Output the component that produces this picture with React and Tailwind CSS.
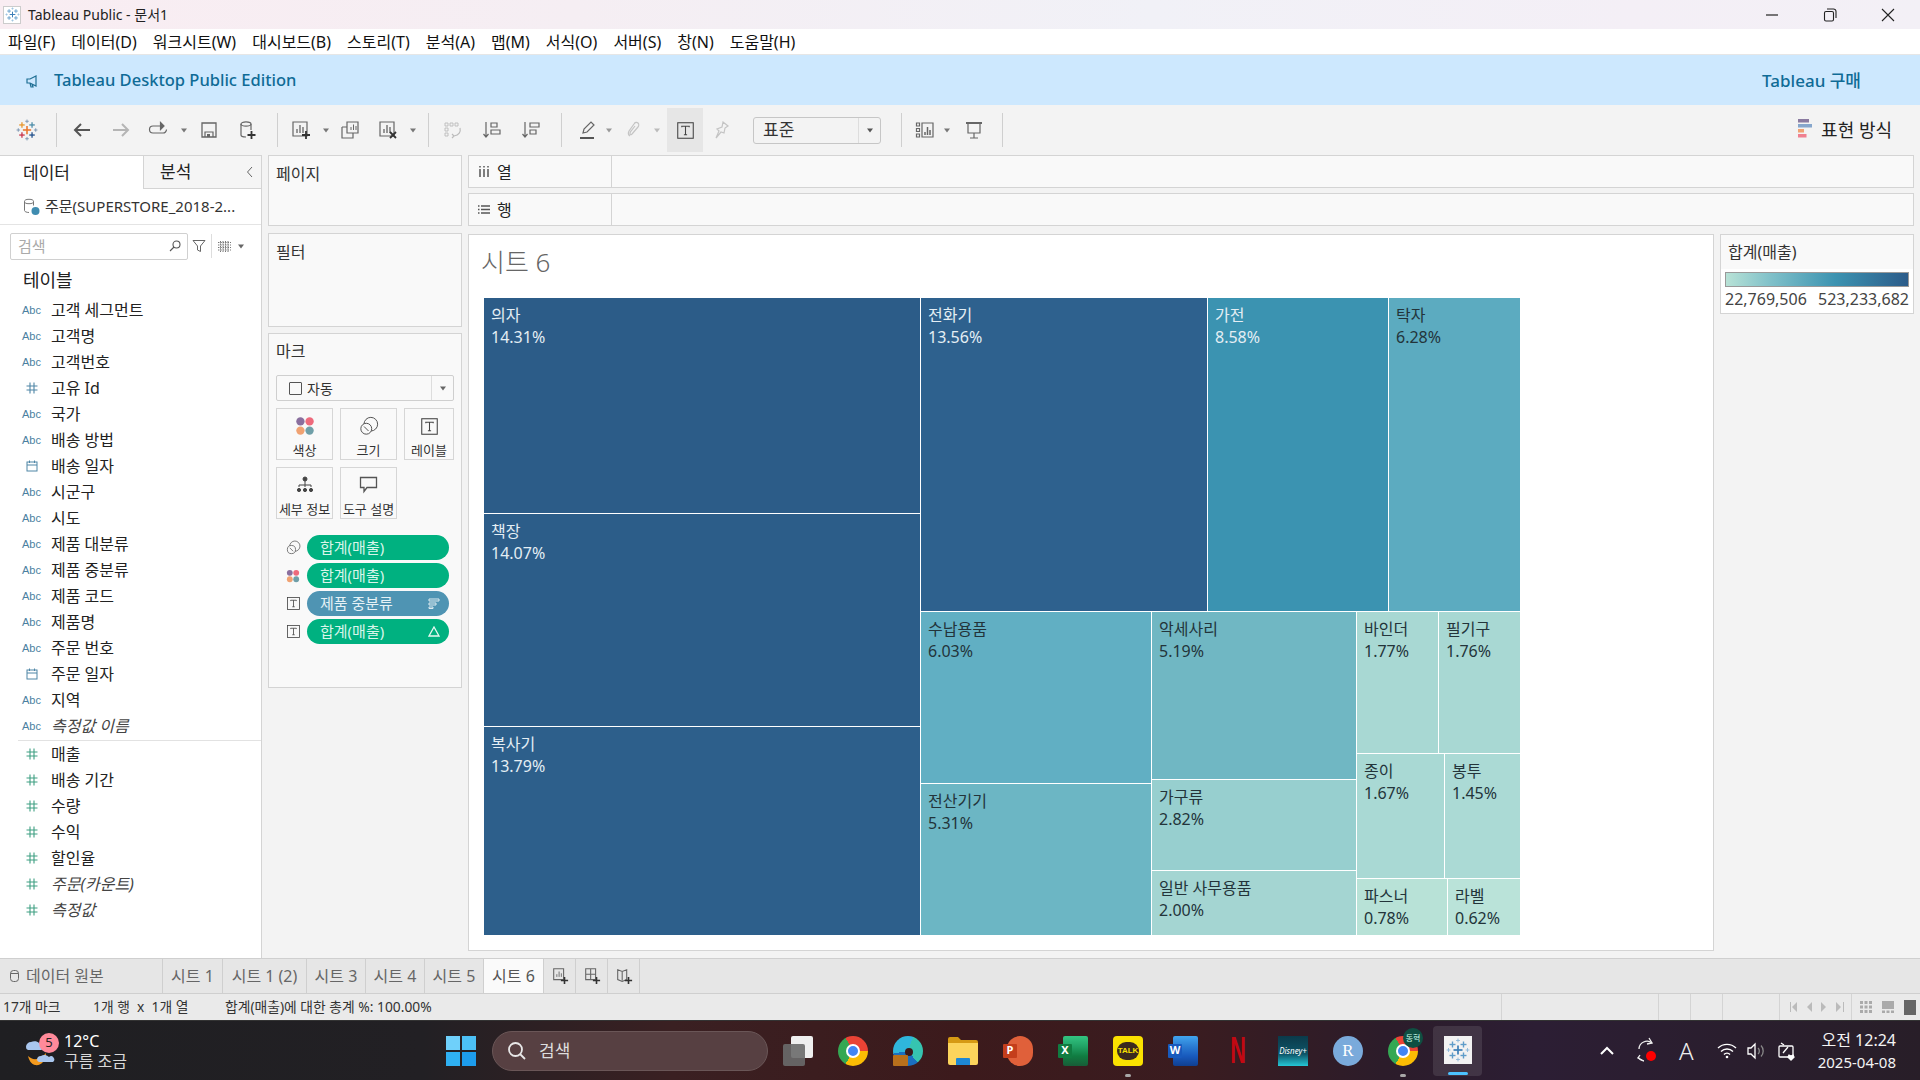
import React from "react";

const Cross = ({ x, y, r, c, w = 1 }) => (
  <g stroke={c} strokeWidth={w}>
    <line x1={x - r} y1={y} x2={x + r} y2={y} />
    <line x1={x} y1={y - r} x2={x} y2={y + r} />
  </g>
);
const TabLogo = ({ size = 20, colored = false }) => {
  const m = colored ? "#e8762d" : "#3c7fb8";
  const tl = colored ? "#e8972d" : "#5f9cc9";
  const tr = colored ? "#4a8ca8" : "#5f9cc9";
  const bl = colored ? "#c8334a" : "#5f9cc9";
  const br = colored ? "#1f4f8b" : "#5f9cc9";
  const s = colored ? "#7a94b0" : "#8fbadb";
  return (
    <svg width={size} height={size} viewBox="0 0 24 24" fill="none">
      <Cross x={12} y={12} r={4.5} c={m} w={1.7} />
      <Cross x={6.5} y={6.5} r={3} c={tl} w={1.4} />
      <Cross x={17.5} y={6.5} r={3} c={tr} w={1.4} />
      <Cross x={6.5} y={17.5} r={3} c={bl} w={1.4} />
      <Cross x={17.5} y={17.5} r={3} c={br} w={1.4} />
      <Cross x={12} y={2.5} r={1.9} c={s} w={1} />
      <Cross x={12} y={21.5} r={1.9} c={s} w={1} />
      <Cross x={2.5} y={12} r={1.9} c={s} w={1} />
      <Cross x={21.5} y={12} r={1.9} c={s} w={1} />
    </svg>
  );
};
const Ic = ({ children, w = 20, h = 20 }) => (
  <svg width={w} height={h} viewBox="0 0 20 20" fill="none" stroke="#666" strokeWidth="1.2" className="shrink-0">
    {children}
  </svg>
);
const Dd = ({ c = "#777" }) => (
  <svg width="8" height="5" viewBox="0 0 8 5" className="shrink-0"><path d="M1 0.5h6L4 4.5z" fill={c} /></svg>
);
const Sep = ({ cls }) => <div className={`w-px h-[34px] bg-[#cfcfcf] shrink-0 ${cls}`} />;
const Plus = ({ x, y }) => <path d={`M${x - 4} ${y}h8M${x} ${y - 4}v8`} stroke="#333" strokeWidth="1.8" />;
const BarsBox = () => (
  <>
    <path d="M2 2h14v14H2z" />
    <path d="M6 13v-4M9 13V5M12 13v-6" strokeWidth="1.3" />
  </>
);
const TIcon = ({ size = 16 }) => (
  <svg width={size} height={size} viewBox="0 0 16 16" fill="none" stroke="#444" className="shrink-0">
    <rect x="0.7" y="0.7" width="14.6" height="14.6" />
    <path d="M4.5 5V4h7v1M8 4v8M6.5 12h3" strokeWidth="1" />
  </svg>
);
const Dots = ({ size = 24 }) => (
  <svg width={size} height={size} viewBox="0 0 24 24" className="shrink-0">
    <circle cx="6.5" cy="6.5" r="5" fill="#8a6f9e" />
    <circle cx="17.5" cy="6.5" r="5" fill="#ee6a7c" />
    <circle cx="6.5" cy="17.5" r="5" fill="#f0a272" />
    <circle cx="17.5" cy="17.5" r="5" fill="#6f9fa8" />
  </svg>
);
const SizeIc = ({ size = 22 }) => (
  <svg width={size} height={size} viewBox="0 0 22 22" fill="none" stroke="#555" strokeWidth="1.1" className="shrink-0">
    <circle cx="13" cy="9" r="7.5" />
    <circle cx="8" cy="14" r="6" fill="#f9f9f9" />
    <path d="M5.5 11.5l5 5" />
  </svg>
);
const Hash = ({ c }) => (
  <svg width="12" height="12" viewBox="0 0 12 12" stroke={c} strokeWidth="1.1" className="shrink-0">
    <path d="M4 0.5v11M8 0.5v11M0.5 4h11M0.5 8h11" />
  </svg>
);
const Cal = () => (
  <svg width="12" height="12" viewBox="0 0 12 12" fill="none" stroke="#4f86a6" strokeWidth="1" className="shrink-0">
    <rect x="1" y="2" width="10" height="9" />
    <path d="M1 5h10M3.5 0.5v2.5M8.5 0.5v2.5" />
  </svg>
);

const Field = ({ type, name, italic, color = "blue" }) => (
  <div className="h-[26px] flex items-center shrink-0">
    <div className="w-[51px] flex justify-center pl-[12px] shrink-0">
      {type === "abc" && <span className="text-[11px] font-['Liberation_Sans',sans-serif] text-[#4b7f9f]">Abc</span>}
      {type === "hash" && <Hash c={color === "green" ? "#3f9f82" : "#4f86a6"} />}
      {type === "cal" && <Cal />}
    </div>
    <span className={`text-[16px] text-[#222] ${italic ? "italic text-[#444]" : ""}`}>{name}</span>
  </div>
);

const Card = ({ label, children, w = "w-[57px]" }) => (
  <div className={`${w} h-[52px] border border-[#d6d6d6] flex flex-col items-center pt-[5px] shrink-0`}>
    <div className="h-[24px] flex items-center justify-center">{children}</div>
    <span className="text-[13px] leading-[16px] mt-[4px] text-[#333] whitespace-nowrap">{label}</span>
  </div>
);

const Pill = ({ icon, text, blue, right }) => (
  <div className="flex items-center h-[25px] mb-[3px] shrink-0">
    <div className="w-[38px] flex justify-center pl-[10px] shrink-0">{icon}</div>
    <div className={`w-[142px] h-[25px] rounded-full flex items-center justify-between pl-[13px] pr-[9px] text-[15px] ${blue ? "bg-[#4f94b3] text-[#e6f2f6]" : "bg-[#00b180] text-[#d8f5ea]"}`}>
      <span>{text}</span>
      {right}
    </div>
  </div>
);

const Cell = ({ name, pct, cls, light, w, h }) => (
  <div className={`${cls} ${w || ""} ${h || ""} pl-[7px] pt-[6px] text-[16px] leading-[22px] overflow-hidden ${light ? "text-[#e4eef4]" : "text-[#23343a]"}`}>
    <div className="whitespace-nowrap">{name}</div>
    <div>{pct}</div>
  </div>
);

const Tab = ({ w, children, active }) => (
  <div className={`${w} h-full border-r border-[#cfcfcf] flex items-center justify-center text-[16px] shrink-0 ${active ? "bg-[#fafafa] text-[#555]" : "text-[#666]"}`}>
    {children}
  </div>
);

const Slot = ({ children, badge, cls = "ml-[15px]" }) => (
  <div className={`w-[40px] h-[40px] relative flex items-center justify-center shrink-0 ${cls}`}>
    {children}
    {badge && <div className="absolute bottom-[-6px] w-[6px] h-[3px] rounded bg-[#a8a8a8]" />}
  </div>
);

const menu = [
  ["파일(F)", "ml-[8px]"], ["데이터(D)", "ml-[16px]"], ["워크시트(W)", "ml-[16px]"], ["대시보드(B)", "ml-[16px]"],
  ["스토리(T)", "ml-[16px]"], ["분석(A)", "ml-[16px]"], ["맵(M)", "ml-[16px]"], ["서식(O)", "ml-[16px]"],
  ["서버(S)", "ml-[16px]"], ["창(N)", "ml-[16px]"], ["도움말(H)", "ml-[16px]"],
];

const dims = [
  ["abc", "고객 세그먼트"], ["abc", "고객명"], ["abc", "고객번호"], ["hash", "고유 Id"], ["abc", "국가"],
  ["abc", "배송 방법"], ["cal", "배송 일자"], ["abc", "시군구"], ["abc", "시도"], ["abc", "제품 대분류"],
  ["abc", "제품 중분류"], ["abc", "제품 코드"], ["abc", "제품명"], ["abc", "주문 번호"], ["cal", "주문 일자"],
  ["abc", "지역"], ["abc", "측정값 이름", true],
];
const meas = [["매출"], ["배송 기간"], ["수량"], ["수익"], ["할인율"], ["주문(카운트)", true], ["측정값", true]];

export default function App() {
  return (
    <div className="w-[1920px] h-[1080px] overflow-hidden flex flex-col bg-[#f3f3f3] font-['Noto_Sans','Noto_Sans_CJK_KR',sans-serif] text-[#222]">
      {/* title bar */}
      <div className="h-[29px] shrink-0 flex items-center bg-[linear-gradient(90deg,#f9edf2_0%,#f5eef3_30%,#f1f1f7_60%,#f4eff6_85%,#f3f0f6_100%)]">
        <div className="ml-[3px] w-[18px] h-[18px] bg-white border border-[#ccc] flex items-center justify-center"><TabLogo size={15} /></div>
        <span className="ml-[7px] text-[14px] text-[#222]">Tableau Public - 문서1</span>
        <div className="ml-auto flex items-center">
          <svg width="14" height="14" viewBox="0 0 14 14" stroke="#222" className="mr-[44px]"><path d="M1 7h12" strokeWidth="1.2" /></svg>
          <svg width="14" height="14" viewBox="0 0 14 14" fill="none" stroke="#222" className="mr-[44px]" strokeWidth="1.1"><rect x="1.5" y="3.5" width="9" height="9.5" rx="1.5" /><path d="M4 1h6.5A2.5 2.5 0 0 1 13 3.5V10" /></svg>
          <svg width="14" height="14" viewBox="0 0 14 14" stroke="#222" className="mr-[25px]" strokeWidth="1.1"><path d="M1 1l12 12M13 1L1 13" /></svg>
        </div>
      </div>
      {/* menu */}
      <div className="h-[26px] shrink-0 bg-white border-b border-[#e6e6e6] flex items-center text-[16px] text-[#111]">
        {menu.map(([t, c]) => <span key={t} className={c}>{t}</span>)}
      </div>
      {/* banner */}
      <div className="h-[50px] shrink-0 bg-[#cde8fe] flex items-center text-[#0f6b96] text-[17px] pt-[1px]">
        <svg width="14" height="14" viewBox="0 0 14 14" fill="none" stroke="#1f6f94" strokeWidth="1.2" className="ml-[26px]"><path d="M1 5v4h3l6 3V2L4 5zM4 9l1 4h2l-1-3" /></svg>
        <span className="ml-[14px] font-medium text-[16.5px]">Tableau Desktop Public Edition</span>
        <span className="ml-auto mr-[59px] font-medium">Tableau 구매</span>
      </div>
      {/* toolbar */}
      <div className="h-[50px] shrink-0 flex items-center relative">
        <div className="ml-[16px] w-[22px] h-[22px]"><TabLogo size={22} colored /></div>
        <Sep cls="ml-[18px]" />
        <div className="ml-[15px]"><Ic><path d="M18 10H3M9 4l-6 6 6 6" strokeWidth="2" stroke="#555" /></Ic></div>
        <div className="ml-[19px]"><Ic><path d="M2 10h15M11 4l6 6-6 6" strokeWidth="2" stroke="#b5b5b5" /></Ic></div>
        <div className="ml-[17px]"><Ic><path d="M15 6H5a3.5 3.5 0 0 0 0 7h10a3.5 3.5 0 0 0 3.5-3.5" /><path d="M12.5 2.5L16 6l-3.5 3.5z" fill="#666" /></Ic></div>
        <div className="ml-[12px]"><Dd /></div>
        <div className="ml-[11px]"><Ic><path d="M3 3h14v14H3z" strokeWidth="1.3" /><path d="M6 17v-5h8v5" /><path d="M8 14h3v3H8z" fill="#666" stroke="none" /></Ic></div>
        <div className="ml-[18px]"><Ic><ellipse cx="9" cy="4" rx="5" ry="2.2" /><path d="M4 4v11c0 1 2 2 5 2M14 4v6" /><Plus x={14.5} y={15} /></Ic></div>
        <Sep cls="ml-[20px]" />
        <div className="ml-[13px]"><Ic><BarsBox /><Plus x={15} y={15} /></Ic></div>
        <div className="ml-[11px]"><Dd /></div>
        <div className="ml-[10px]"><Ic><path d="M7 2h11v11H7z" /><path d="M2 7h5M2 7v11h11v-5" /><path d="M11 10V7M13.5 10V4.5M16 10V6" strokeWidth="1" /></Ic></div>
        <div className="ml-[18px]"><Ic><BarsBox /><path d="M12 12l6 6M18 12l-6 6" stroke="#333" strokeWidth="1.8" /></Ic></div>
        <div className="ml-[11px]"><Dd /></div>
        <Sep cls="ml-[11px]" />
        <div className="ml-[14px]"><Ic><path d="M2 3h3v3H2zM7 3h3v3H7zM12 3h3v3h-3zM2 8h3v3H2zM2 13h3v3H2z" stroke="#bbb" strokeWidth="0.9" /><path d="M17 8c1 4-1 7-6 8M9 14l2 2-2 2" stroke="#bbb" /></Ic></div>
        <div className="ml-[19px]"><Ic><path d="M4 2v15M1.5 14L4 17l2.5-3" /><path d="M9 3h6v4H9zM9 10h9v4H9z" /></Ic></div>
        <div className="ml-[19px]"><Ic><path d="M4 2v15M1.5 14L4 17l2.5-3" /><path d="M9 3h9v4H9zM9 10h6v4H9z" /></Ic></div>
        <Sep cls="ml-[20px]" />
        <div className="ml-[15px]"><Ic><path d="M6 13l1-4 7-7 3 3-7 7z" /><path d="M3 18h14" strokeWidth="2" stroke="#555" /></Ic></div>
        <div className="ml-[8px]"><Dd c="#999" /></div>
        <div className="ml-[10px]"><Ic><path d="M7 16c-2-1-2-3-1-5l5-7c1-2 3-2 4-1s1 3 0 4l-6 7c-1 1-2 1-2 0s0-2 1-3l4-5" stroke="#c4c4c4" /></Ic></div>
        <div className="ml-[10px]"><Dd c="#bbb" /></div>
        <div className="ml-[6px] w-[36px] h-[44px] bg-[#e6e6e6] flex items-center justify-center"><TIcon size={17} /></div>
        <div className="ml-[8px]"><Ic><path d="M12 2l5 4-3 2-1 5-3-1-5 6 3-7-2-2 5-2z" stroke="#c4c4c4" /></Ic></div>
        <div className="ml-[22px] w-[128px] h-[27px] border border-[#c6c6c6] rounded-[3px] flex items-center text-[17px] shrink-0">
          <span className="ml-[9px] text-[#333]">표준</span>
          <div className="ml-auto w-[22px] h-full border-l border-[#ddd] flex items-center justify-center"><Dd c="#555" /></div>
        </div>
        <Sep cls="ml-[20px]" />
        <div className="ml-[13px]"><Ic><path d="M7 3h11v14H7z" /><path d="M1.5 3h3v3h-3zM1.5 8.5h3v3h-3zM1.5 14h3v3h-3z" /><path d="M10 15v-3M12.5 15V7M15 15v-5" strokeWidth="1.5" /></Ic></div>
        <div className="ml-[8px]"><Dd /></div>
        <div className="ml-[13px]"><Ic><path d="M2 3h16" strokeWidth="2" /><path d="M4 4v9h12V4M10 13v5M6 18h8" /></Ic></div>
        <Sep cls="ml-[18px]" />
        <div className="ml-auto mr-[28px] flex items-center">
          <svg width="14" height="19" viewBox="0 0 14 19" className="mr-[9px] mb-[4px]">
            <rect x="0" y="0" width="11" height="3.5" fill="#8a7aa0" />
            <rect x="0" y="5" width="14" height="3.5" fill="#86a6cc" />
            <rect x="0" y="10" width="6" height="3.5" fill="#f0a272" />
            <rect x="0" y="15" width="8.5" height="3.5" fill="#f08090" />
          </svg>
          <span className="text-[18px] text-[#222]">표현 방식</span>
        </div>
      </div>
      {/* body */}
      <div className="h-[803px] shrink-0 flex">
        {/* sidebar */}
        <div className="w-[262px] shrink-0 bg-white border-r border-[#d4d4d4] flex flex-col">
          <div className="h-[34px] flex shrink-0">
            <div className="w-[143px] flex items-center pl-[23px] text-[17px] border-t border-[#d4d4d4]">데이터</div>
            <div className="flex-1 bg-[#f5f5f5] border-l border-b border-t border-[#d4d4d4] flex items-center pl-[16px] text-[17px] relative">
              분석
              <svg width="8" height="12" viewBox="0 0 8 12" fill="none" stroke="#666" className="absolute right-[7px] top-[10px]"><path d="M6 1L1.5 6 6 11" /></svg>
            </div>
          </div>
          <div className="h-[36px] flex items-center border-b border-[#e4e4e4] shrink-0">
            <svg width="17" height="18" viewBox="0 0 17 18" fill="none" stroke="#777" className="ml-[23px] shrink-0"><ellipse cx="6" cy="3.5" rx="4.5" ry="2.2" /><path d="M1.5 3.5v9c0 1 2 2 4.5 2M10.5 3.5v4" /><circle cx="12.5" cy="13" r="4" fill="#3f8cb0" stroke="none" /></svg>
            <span className="ml-[5px] text-[15px] text-[#333] whitespace-nowrap">주문(SUPERSTORE_2018-2...</span>
          </div>
          <div className="flex items-center h-[36px] shrink-0 mt-[3px]">
            <div className="ml-[10px] w-[178px] h-[27px] border border-[#d0d0d0] rounded-[2px] flex items-center justify-between pl-[7px] pr-[6px]">
              <span className="text-[15px] text-[#aaa]">검색</span>
              <svg width="12" height="12" viewBox="0 0 12 12" fill="none" stroke="#555" strokeWidth="1.1"><circle cx="7.5" cy="4.5" r="3.5" /><path d="M5 7l-4 4" /></svg>
            </div>
            <svg width="14" height="14" viewBox="0 0 14 14" fill="none" stroke="#666" className="ml-[4px]"><path d="M1 1.5h12L8.5 7v5.5l-3-1.5V7z" /></svg>
            <div className="w-px h-[24px] bg-[#ddd] ml-[5px]" />
            <svg width="13" height="11" viewBox="0 0 13 11" stroke="#666" className="ml-[6px]"><path d="M0 1.5h13M0 4h13M0 6.5h13M0 9h13M2.5 0v11M5 0v11M7.5 0v11M10 0v11" strokeWidth="0.9" strokeDasharray="1.4 1" /></svg>
            <div className="ml-[6px]"><Dd c="#666" /></div>
          </div>
          <div className="ml-[23px] mt-[3px] h-[27px] flex items-center text-[18px] shrink-0">테이블</div>
          <div className="mt-[3px]">
            {dims.map(([t, n, i]) => <Field key={n} type={t} name={n} italic={i} />)}
          </div>
          <div className="ml-[18px] h-px bg-[#e2e2e2] mt-[1px] mb-[0px]" />
          <div>
            {meas.map(([n, i]) => <Field key={n} type="hash" color="green" name={n} italic={i} />)}
          </div>
        </div>
        {/* middle */}
        <div className="w-[194px] ml-[6px] shrink-0 flex flex-col gap-[7px]">
          <div className="h-[71px] bg-[#f9f9f9] border border-[#d4d4d4] pl-[7px] pt-[6px] text-[16px] text-[#333]">페이지</div>
          <div className="h-[94px] bg-[#f9f9f9] border border-[#d4d4d4] pl-[7px] pt-[6px] text-[16px] text-[#333]">필터</div>
          <div className="h-[355px] -mt-[1px] bg-[#f9f9f9] border border-[#d4d4d4] px-[7px] pt-[6px] flex flex-col text-[#333]">
            <div className="text-[16px] h-[22px] leading-[22px]">마크</div>
            <div className="mt-[13px] h-[26px] border border-[#cfcfcf] rounded-[2px] flex items-center">
              <div className="w-[13px] h-[13px] ml-[12px] border border-[#555] rounded-[1px]" />
              <span className="ml-[5px] text-[14px]">자동</span>
              <div className="ml-auto w-[22px] h-full border-l border-[#ddd] flex items-center justify-center"><Dd c="#666" /></div>
            </div>
            <div className="flex mt-[7px] gap-[7px]">
              <Card label="색상"><Dots size={20} /></Card>
              <Card label="크기"><SizeIc size={20} /></Card>
              <Card label="레이블" w="w-[50px]"><TIcon size={17} /></Card>
            </div>
            <div className="flex mt-[7px] gap-[7px]">
              <Card label="세부 정보">
                <svg width="18" height="18" viewBox="0 0 18 18" fill="#444" stroke="#444"><circle cx="9" cy="3" r="2" /><path d="M9 5v6M3 11V9h12v2" fill="none" /><circle cx="3" cy="14" r="1.6" /><circle cx="9" cy="14" r="1.6" /><circle cx="15" cy="14" r="1.6" /></svg>
              </Card>
              <Card label="도구 설명">
                <svg width="19" height="18" viewBox="0 0 19 18" fill="none" stroke="#555" strokeWidth="1.3"><path d="M1.5 1.5h16v10H8l-3 4v-4H1.5z" /></svg>
              </Card>
            </div>
            <div className="mt-[16px] -ml-[7px] flex flex-col">
              <Pill icon={<SizeIc size={15} />} text="합계(매출)" />
              <Pill icon={<Dots size={14} />} text="합계(매출)" />
              <Pill icon={<TIcon size={13} />} text="제품 중분류" blue right={
                <svg width="12" height="11" viewBox="0 0 12 11" fill="none" stroke="#dceaf0"><path d="M1 1h10v2H1zM1 5h7v2H1zM1 9h4v1.5H1z" /></svg>
              } />
              <Pill icon={<TIcon size={13} />} text="합계(매출)" right={
                <svg width="12" height="11" viewBox="0 0 12 11" fill="none" stroke="#e6f8f0" strokeWidth="1.3"><path d="M6 1l5 9H1z" /></svg>
              } />
            </div>
          </div>
        </div>
        {/* right */}
        <div className="w-[1446px] ml-[6px] shrink-0 flex flex-col">
          <div className="h-[33px] bg-[#f9f9f9] border border-[#d4d4d4] flex shrink-0">
            <div className="w-[143px] border-r border-[#d4d4d4] flex items-center pl-[9px] text-[16px]">
              <svg width="12" height="11" viewBox="0 0 12 11" stroke="#555" strokeWidth="1.5" fill="none" className="mr-[7px]"><path d="M2 3v8M6 3v8M10 3v8M2 0v1.5M6 0v1.5M10 0v1.5" /></svg>
              열
            </div>
          </div>
          <div className="h-[33px] mt-[5px] bg-[#f9f9f9] border border-[#d4d4d4] flex shrink-0">
            <div className="w-[143px] border-r border-[#d4d4d4] flex items-center pl-[9px] text-[16px]">
              <svg width="12" height="11" viewBox="0 0 12 11" stroke="#555" strokeWidth="1.5" fill="none" className="mr-[7px]"><path d="M3 2h9M3 5.5h9M3 9h9M0 2h1.5M0 5.5h1.5M0 9h1.5" /></svg>
              행
            </div>
          </div>
          <div className="flex mt-[8px] gap-[6px]">
            {/* canvas */}
            <div className="w-[1246px] h-[717px] bg-white border border-[#d4d4d4] pl-[15px] flex flex-col">
              <div className="h-[63px] shrink-0 pt-[11px] text-[26px] leading-[32px] font-light text-[#666] -ml-[3px]">시트 6</div>
              <div className="w-[1036px] h-[637px] flex gap-px shrink-0">
                <div className="w-[436px] flex flex-col gap-px">
                  <Cell name="의자" pct="14.31%" cls="bg-[#2c5c88]" light h="h-[215px]" />
                  <Cell name="책장" pct="14.07%" cls="bg-[#2c5d89]" light h="h-[212px]" />
                  <Cell name="복사기" pct="13.79%" cls="bg-[#2d5f8b]" light h="flex-1" />
                </div>
                <div className="flex-1 flex flex-col gap-px">
                  <div className="h-[313px] flex gap-px">
                    <Cell name="전화기" pct="13.56%" cls="bg-[#2e618e]" light w="w-[286px]" />
                    <Cell name="가전" pct="8.58%" cls="bg-[#3b93b1]" light w="w-[180px]" />
                    <Cell name="탁자" pct="6.28%" cls="bg-[#5cabc0]" w="flex-1" />
                  </div>
                  <div className="flex-1 flex gap-px">
                    <div className="w-[230px] flex flex-col gap-px">
                      <Cell name="수납용품" pct="6.03%" cls="bg-[#61afc3]" h="h-[171px]" />
                      <Cell name="전산기기" pct="5.31%" cls="bg-[#6cb6c4]" h="flex-1" />
                    </div>
                    <div className="w-[204px] flex flex-col gap-px">
                      <Cell name="악세사리" pct="5.19%" cls="bg-[#70b7c3]" h="h-[167px]" />
                      <Cell name="가구류" pct="2.82%" cls="bg-[#97cfcf]" h="h-[90px]" />
                      <Cell name="일반 사무용품" pct="2.00%" cls="bg-[#a4d5d2]" h="flex-1" />
                    </div>
                    <div className="flex-1 flex flex-col gap-px">
                      <div className="h-[141px] flex gap-px">
                        <Cell name="바인더" pct="1.77%" cls="bg-[#a8d8d3]" w="w-[81px]" />
                        <Cell name="필기구" pct="1.76%" cls="bg-[#a8d8d3]" w="flex-1" />
                      </div>
                      <div className="h-[124px] flex gap-px">
                        <Cell name="종이" pct="1.67%" cls="bg-[#a9d9d4]" w="w-[87px]" />
                        <Cell name="봉투" pct="1.45%" cls="bg-[#abdad5]" w="flex-1" />
                      </div>
                      <div className="flex-1 flex gap-px">
                        <Cell name="파스너" pct="0.78%" cls="bg-[#b8e2d7]" w="w-[90px]" />
                        <Cell name="라벨" pct="0.62%" cls="bg-[#bae3d9]" w="flex-1" />
                      </div>
                    </div>
                  </div>
                </div>
              </div>
            </div>
            {/* legend */}
            <div className="w-[194px] h-[80px] bg-white border border-[#d4d4d4] flex flex-col">
              <div className="h-[34px] bg-[#f9f9f9] pl-[7px] flex items-center text-[16px] text-[#333]">합계(매출)</div>
              <div className="mx-[4px] mt-[3px] h-[15px] border border-[#999] bg-[linear-gradient(90deg,#b8e2d6_0%,#7fc0c9_25%,#3c93b1_60%,#2c5c8a_100%)] shrink-0" />
              <div className="mx-[4px] mt-[1px] flex justify-between text-[16px] leading-[22px] text-[#444]">
                <span>22,769,506</span><span>523,233,682</span>
              </div>
            </div>
          </div>
        </div>
      </div>
      {/* tabs */}
      <div className="h-[36px] shrink-0 bg-[#e6e6e6] border-y border-[#cfcfcf] flex">
        <Tab w="w-[163px]">
          <div className="w-full flex items-center pl-[10px]">
            <svg width="9" height="12" viewBox="0 0 9 12" fill="none" stroke="#666" className="mr-[7px]"><rect x="0.5" y="0.5" width="8" height="11" rx="3" /><path d="M0.5 3.5h8" /></svg>
            데이터 원본
          </div>
        </Tab>
        <Tab w="w-[60px]">시트 1</Tab>
        <Tab w="w-[84px]">시트 1 (2)</Tab>
        <Tab w="w-[59px]">시트 3</Tab>
        <Tab w="w-[59px]">시트 4</Tab>
        <Tab w="w-[59px]">시트 5</Tab>
        <Tab w="w-[60px]" active>시트 6</Tab>
        <Tab w="w-[32px]"><Ic w={18} h={18}><path d="M3 2h11v12H3z" /><path d="M6.5 11V8M9 11V5M11.5 11V7" strokeWidth="1" /><Plus x={15} y={15} /></Ic></Tab>
        <Tab w="w-[32px]"><Ic w={18} h={18}><path d="M3 2h11v12H3zM3 8h11M8.5 2v12" /><Plus x={15} y={15} /></Ic></Tab>
        <Tab w="w-[32px]"><Ic w={18} h={18}><path d="M3 3l5 2 5-2v11l-5 2-5-2zM8 5v10" /><Plus x={15} y={15} /></Ic></Tab>
      </div>
      {/* status */}
      <div className="h-[26px] shrink-0 bg-[#eaeaea] flex items-center text-[13.8px] text-[#333] relative">
        <span className="ml-[3px] w-[90px] shrink-0">17개 마크</span>
        <span className="w-[132px] whitespace-pre shrink-0">1개 행  x  1개 열</span>
        <span className="w-[1276px] shrink-0">합계(매출)에 대한 총계 %: 100.00%</span>
        <div className="h-full flex items-center">
          <div className="w-[157px] h-full border-l border-[#d4d4d4]" />
          <div className="w-[32px] h-full border-l border-[#d4d4d4]" />
          <div className="w-[32px] h-full border-l border-[#d4d4d4]" />
          <div className="w-[57px] h-full border-l border-[#d4d4d4]" />
          <div className="w-[72px] h-full border-l border-[#d4d4d4] flex items-center justify-center gap-[9px] pl-[2px]">
            <svg width="8" height="10" viewBox="0 0 8 10" fill="#bbb"><path d="M1 0h1v10H1zM8 0v10L3 5z" /></svg>
            <svg width="6" height="10" viewBox="0 0 6 10" fill="#bbb"><path d="M6 0v10L1 5z" /></svg>
            <svg width="6" height="10" viewBox="0 0 6 10" fill="#bbb"><path d="M0 0v10l5-5z" /></svg>
            <svg width="8" height="10" viewBox="0 0 8 10" fill="#bbb"><path d="M7 0h1v10H7zM0 0v10l5-5z" /></svg>
          </div>
          <div className="h-full border-l border-[#d4d4d4] flex items-center gap-[10px] pl-[8px]">
            <svg width="12" height="12" viewBox="0 0 12 12" fill="#aaa"><path d="M0 0h3v3H0zM4.5 0h3v3h-3zM9 0h3v3H9zM0 4.5h3v3H0zM4.5 4.5h3v3h-3zM9 4.5h3v3H9zM0 9h3v3H0zM4.5 9h3v3h-3zM9 9h3v3H9z" /></svg>
            <svg width="12" height="12" viewBox="0 0 12 12" fill="#aaa"><path d="M0 0h12v8H0zM0 9.5h3V12H0zM4.5 9.5h3V12h-3zM9 9.5h3V12H9z" /></svg>
            <svg width="12" height="15" viewBox="0 0 12 15" fill="#666"><path d="M0 0h12v15H0z" /></svg>
          </div>
        </div>
      </div>
      {/* taskbar */}
      <div className="h-[60px] shrink-0 flex items-center text-white bg-[linear-gradient(90deg,#1f1f22_0%,#222024_22%,#3a2022_35%,#3c1a1c_50%,#3a1c20_62%,#2c1c2a_72%,#2c1e34_80%,#281e28_100%)] border-t border-[#333]">
        <div className="ml-[25px] w-[32px] h-[36px] relative shrink-0">
          <svg width="32" height="36" viewBox="0 0 32 36">
            <path d="M1 14a5 5 0 0 1 5-5 7 7 0 0 1 9 2 3 3 0 0 1 1 6H3a3 3 0 0 1-2-3z" fill="#a9c6ee" />
            <path d="M3 23c5 5 12 4 18-3 0 8-5 13-11 12-4-1-6-5-7-9z" fill="#f39a1e" />
            <path d="M12 27a4 4 0 0 1 4-4 6 6 0 0 1 8 1 3 3 0 0 1 4 5H14a3 3 0 0 1-2-2z" fill="#a9c6ee" />
          </svg>
          <div className="absolute left-[14px] top-0 w-[20px] h-[20px] rounded-full bg-[#ff8a9a] text-[#222] text-[13px] flex items-center justify-center">5</div>
        </div>
        <div className="ml-[7px] flex flex-col text-[16px] leading-[20px] w-[100px] shrink-0">
          <span>12°C</span>
          <span className="text-[#d8d8d8]">구름 조금</span>
        </div>
        <div className="ml-[282px] w-[30px] h-[30px] grid grid-cols-2 gap-[2px] shrink-0">
          <div className="bg-[#6fd0fa]" /><div className="bg-[#4cc0f5]" /><div className="bg-[#2fb0f2]" /><div className="bg-[#1d9cec]" />
        </div>
        <div className="ml-[16px] w-[276px] h-[40px] rounded-full bg-[#574042] border border-[#6a5657] flex items-center shrink-0">
          <svg width="20" height="20" viewBox="0 0 20 20" fill="none" stroke="#e8e8e8" strokeWidth="1.8" className="ml-[14px]"><circle cx="8.5" cy="8.5" r="6.5" /><path d="M13 13l5 5" /></svg>
          <span className="ml-[12px] text-[17px] text-[#ddd]">검색</span>
        </div>
        {/* apps */}
        <div className="ml-[10px] flex items-center">
          <Slot cls="ml-0">
            <div className="relative w-[30px] h-[30px]">
              <div className="absolute right-0 top-0 w-[22px] h-[22px] bg-[#efefef] rounded-[2px]" />
              <div className="absolute left-0 bottom-0 w-[22px] h-[22px] bg-[#6a6a6a]/90 rounded-[2px]" />
            </div>
          </Slot>
          <Slot>
            <div className="w-[30px] h-[30px] rounded-full bg-[conic-gradient(from_-30deg,#ea4335_0deg_120deg,#fbbc04_120deg_240deg,#34a853_240deg_360deg)] flex items-center justify-center">
              <div className="w-[14px] h-[14px] rounded-full bg-[#4285f4] border-2 border-white" />
            </div>
          </Slot>
          <Slot>
            <div className="relative w-[30px] h-[30px]">
              <div className="absolute inset-0 rounded-full bg-[conic-gradient(from_20deg,#36c4b0_0deg_120deg,#1a6fc0_120deg_240deg,#2fb6dc_240deg_360deg)]" />
              <div className="absolute left-[12px] top-[12px] w-[8px] h-[8px] rounded-full bg-[#3a1a1c]" />
              <div className="absolute left-0 bottom-0 w-[15px] h-[11px] bg-[#b8701c] rounded-[1px]" />
            </div>
          </Slot>
          <Slot>
            <svg width="30" height="28" viewBox="0 0 30 28"><path d="M0 2a2 2 0 0 1 2-2h8l3 3h15a2 2 0 0 1 2 2v3H0z" fill="#d69a14" /><path d="M0 6h30v20a2 2 0 0 1-2 2H2a2 2 0 0 1-2-2z" fill="#fcd45c" /><path d="M9 21h12a1 1 0 0 1 1 1v6H8v-6a1 1 0 0 1 1-1z" fill="#1e88d4" /></svg>
          </Slot>
          <Slot>
            <div className="relative w-[30px] h-[30px]">
              <div className="absolute right-0 top-0 w-[26px] h-[30px] rounded-full bg-[#e0603a]" />
              <div className="absolute left-0 top-[8px] w-[14px] h-[14px] bg-[#c43e1c] rounded-[1px] text-[11px] font-bold flex items-center justify-center">P</div>
            </div>
          </Slot>
          <Slot>
            <div className="relative w-[30px] h-[30px]">
              <div className="absolute right-0 top-0 w-[25px] h-[30px] rounded-[2px] bg-[linear-gradient(180deg,#33c481_0%,#21a366_34%,#107c41_67%,#185c37_100%)]" />
              <div className="absolute left-0 top-[8px] w-[14px] h-[14px] bg-[#107c41] rounded-[1px] text-[11px] font-bold flex items-center justify-center">X</div>
            </div>
          </Slot>
          <Slot badge>
            <div className="w-[30px] h-[30px] rounded-[4px] bg-[#fae100] flex items-center justify-center">
              <div className="w-[22px] h-[18px] rounded-full bg-[#3b2a1e] text-[#fae100] text-[8px] font-bold flex items-center justify-center font-['Liberation_Sans',sans-serif]">TALK</div>
            </div>
          </Slot>
          <Slot>
            <div className="relative w-[30px] h-[30px]">
              <div className="absolute right-0 top-0 w-[25px] h-[30px] rounded-[2px] bg-[linear-gradient(180deg,#41a5ee_0%,#2b7cd3_34%,#185abd_67%,#103f91_100%)]" />
              <div className="absolute left-0 top-[8px] w-[14px] h-[14px] bg-[#185abd] rounded-[1px] text-[11px] font-bold flex items-center justify-center">W</div>
            </div>
          </Slot>
          <Slot>
            <span className="text-[#c40812] text-[36px] leading-none font-bold scale-x-[0.6] font-['Liberation_Sans',sans-serif]">N</span>
          </Slot>
          <Slot>
            <div className="w-[30px] h-[30px] bg-[linear-gradient(180deg,#0b3a4a_0%,#0d5568_60%,#25c7d6_100%)] flex items-center justify-center text-[8px] text-white italic">Disney+</div>
          </Slot>
          <Slot>
            <div className="w-[30px] h-[30px] rounded-full bg-[#7aaadb] text-white text-[17px] flex items-center justify-center font-['Liberation_Serif',serif]">R</div>
          </Slot>
          <Slot badge>
            <div className="relative w-[30px] h-[30px]">
              <div className="w-[30px] h-[30px] rounded-full bg-[conic-gradient(from_-30deg,#ea4335_0deg_120deg,#fbbc04_120deg_240deg,#34a853_240deg_360deg)] flex items-center justify-center">
                <div className="w-[14px] h-[14px] rounded-full bg-[#4285f4] border-2 border-white" />
              </div>
              <div className="absolute -right-[5px] -top-[8px] w-[20px] h-[20px] rounded-full bg-[#0f4f42] text-[8px] text-[#cfe] flex items-center justify-center">동혁</div>
            </div>
          </Slot>
          <div className="ml-[10px] w-[49px] h-[50px] rounded-[4px] bg-[#ffffff]/10 relative flex items-center justify-center">
            <div className="w-[28px] h-[28px] bg-[#f2f2f2] mb-[2px] flex items-center justify-center"><TabLogo size={24} /></div>
            <div className="absolute bottom-[1px] w-[20px] h-[3px] rounded bg-[#4cc2ff]" />
          </div>
        </div>
        {/* tray */}
        <div className="ml-[118px] flex items-center shrink-0">
          <svg width="14" height="10" viewBox="0 0 14 10" fill="none" stroke="#fff" strokeWidth="2"><path d="M1 8l6-6 6 6" /></svg>
          <svg width="22" height="28" viewBox="0 0 22 28" fill="none" stroke="#eee" strokeWidth="1.3" className="ml-[22px]"><path d="M3 12a8 8 0 0 1 13-6M2 20a8 8 0 0 0 6 4" /><path d="M13 1l3 5-5 1M4 18l-2 3 4 2" /><circle cx="15" cy="19" r="5" fill="#f00" stroke="none" /></svg>
          <span className="ml-[21px] text-[24px] font-light leading-none text-[#eee]">A</span>
          <svg width="20" height="16" viewBox="0 0 20 16" fill="none" stroke="#fff" strokeWidth="1.4" className="ml-[23px]"><path d="M1 5a13 13 0 0 1 18 0M4 8.5a8.5 8.5 0 0 1 12 0M7 11.5a4 4 0 0 1 6 0" /><circle cx="10" cy="14" r="1.3" fill="#fff" stroke="none" /></svg>
          <svg width="20" height="18" viewBox="0 0 20 18" fill="none" stroke="#fff" strokeWidth="1.3" className="ml-[9px]"><path d="M2 6h3l4-4v14l-4-4H2z" /><path d="M12 6a4 4 0 0 1 0 6M15 3.5a8 8 0 0 1 0 11" stroke="#888" /></svg>
          <svg width="20" height="20" viewBox="0 0 20 20" fill="none" stroke="#fff" strokeWidth="1.3" className="ml-[11px]"><rect x="2" y="5" width="14" height="11" rx="1" /><path d="M6 12l5-6M4 2l3 2" /><path d="M14 19l-3-3 1-2 2 1 2-1 1 2z" fill="#fff" /></svg>
        </div>
        <div className="ml-auto mr-[24px] flex flex-col items-end text-[16px] leading-[22px] shrink-0 text-[#f4f4f4]">
          <span>오전 12:24</span>
          <span className="text-[15px]">2025-04-08</span>
        </div>
      </div>
    </div>
  );
}
